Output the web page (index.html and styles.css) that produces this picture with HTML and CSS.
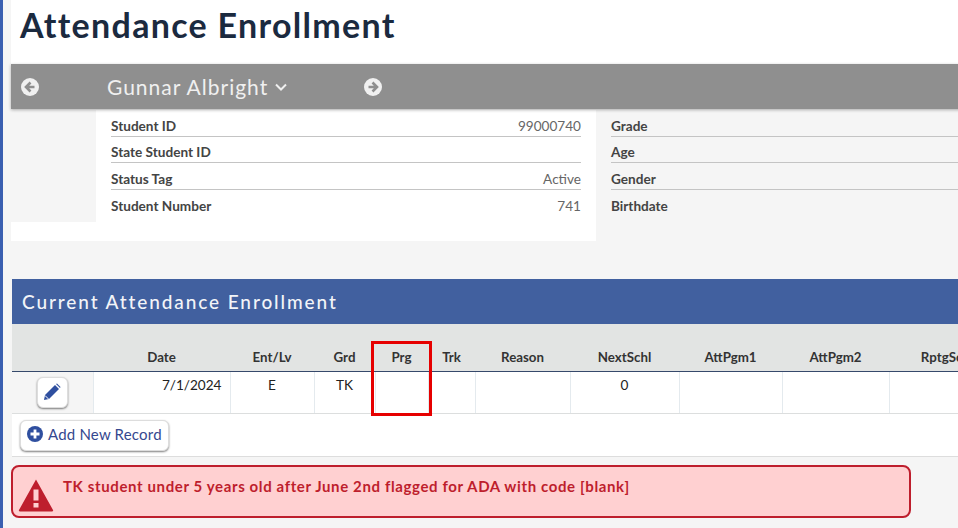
FILE: index.html
```html
<!DOCTYPE html>
<html>
<head>
    <title>Attendance Enrollment</title>
    <link rel="stylesheet" href="styles.css">
</head>
<body>
    <div class="page">
        <h1 class="page-title">Attendance Enrollment</h1>

        <!-- Student banner -->
        <div class="student-bar">
            <svg class="nav-icon" viewBox="0 0 18 18"><circle cx="9" cy="9" r="9" fill="#f0f0f0"/><path d="M9.5 4.5 5 9l4.500 4.500M5.500 9H13.500" fill="none" stroke="#8f8f8f" stroke-width="2.600"/></svg>
            <div class="student-name">
                <span>Gunnar Albright</span>
                <svg class="chevron" viewBox="0 0 12 8"><path d="M1 1.500 6 6.500 11 1.500" fill="none" stroke="#f0f0f0" stroke-width="2"/></svg>
            </div>
            <svg class="nav-icon" viewBox="0 0 18 18"><circle cx="9" cy="9" r="9" fill="#f0f0f0"/><path d="M8.500 4.500 13 9l-4.500 4.500M12.500 9H4.500" fill="none" stroke="#8f8f8f" stroke-width="2.600"/></svg>
        </div>

        <!-- Student details -->
        <div class="student-info">
            <div class="info-left">
                <div class="photo-slot"></div>
                <div class="info-rows">
                    <div class="info-row"><span class="info-label">Student ID</span><span class="info-value">99000740</span></div>
                    <div class="info-row"><span class="info-label">State Student ID</span></div>
                    <div class="info-row"><span class="info-label">Status Tag</span><span class="info-value">Active</span></div>
                    <div class="info-row"><span class="info-label">Student Number</span><span class="info-value">741</span></div>
                </div>
            </div>
            <div class="info-right">
                <div class="info-row"><span class="info-label">Grade</span></div>
                <div class="info-row"><span class="info-label">Age</span></div>
                <div class="info-row"><span class="info-label">Gender</span></div>
                <div class="info-row"><span class="info-label">Birthdate</span></div>
            </div>
        </div>

        <!-- Enrollment table -->
        <div class="section">
            <h2 class="section-title">Current Attendance Enrollment</h2>
            <table class="enroll-table">
                <colgroup>
                    <col class="col-edit">
                    <col class="col-date">
                    <col class="col-entlv">
                    <col class="col-grd">
                    <col class="col-prg">
                    <col class="col-trk">
                    <col class="col-reason">
                    <col class="col-next">
                    <col class="col-pgm1">
                    <col class="col-pgm2">
                    <col class="col-rptg">
                </colgroup>
                <thead>
                    <tr>
                        <th></th>
                        <th>Date</th>
                        <th>Ent/Lv</th>
                        <th>Grd</th>
                        <th>Prg</th>
                        <th>Trk</th>
                        <th>Reason</th>
                        <th>NextSchl</th>
                        <th>AttPgm1</th>
                        <th>AttPgm2</th>
                        <th>RptgSchl</th>
                    </tr>
                </thead>
                <tbody>
                    <tr>
                        <td class="edit-cell">
                            <button class="edit-btn">
                                <svg viewBox="0 0 18 18" width="18" height="18"><path d="M1 17l1-5L12 2l4 4L6 16z" fill="#2f4f9f"/><path d="M13 1l1-.500 3.500 3.500-.500 1z" fill="#2f4f9f"/><path d="M2 12.500l3.500 3.500" stroke="#fff" stroke-width="1"/></svg>
                            </button>
                        </td>
                        <td class="date-cell">7/1/2024</td>
                        <td>E</td>
                        <td>TK</td>
                        <td></td>
                        <td></td>
                        <td></td>
                        <td>0</td>
                        <td></td>
                        <td></td>
                        <td></td>
                    </tr>
                </tbody>
            </table>
            <div class="table-footer">
                <button class="add-btn">
                    <svg viewBox="0 0 16 16" width="16" height="16"><circle cx="8" cy="8" r="8" fill="#2f4f9f"/><path d="M8 3.500v9M3.500 8h9" stroke="#fff" stroke-width="2.800"/></svg>
                    Add New Record
                </button>
            </div>
            <div class="highlight-box"></div>
        </div>

        <!-- Warning -->
        <div class="alert">
            <svg class="alert-icon" viewBox="0 0 36 34" width="36" height="34"><path d="M18 1.500 35 32a1 1 0 0 1-1 1.500H2A1 1 0 0 1 1 32z" fill="#be1e2d"/><path d="M15.500 11.500h5v11h-5zM15.500 25h5v4.500h-5z" fill="#ffd0d1"/></svg>
            <span>TK student under 5 years old after June 2nd flagged for ADA with code [blank]</span>
        </div>
    </div>
</body>
</html>
```

FILE: styles.css
```css
html, body {
    margin: 0;
    height: 100%;
    overflow: hidden;
}

body {
    font-family: Lato, "Liberation Sans", sans-serif;
    background-color: #f5f5f5;
    border-left: 3px solid #3a5fb0;
}

.page {
    padding-left: 8px;
    width: 1100px;
}

.page-title {
    margin: 0;
    height: 64px;
    padding-left: 9px;
    font-size: 34px;
    line-height: 50px;
    font-weight: 700;
    letter-spacing: 1.300px;
    color: #1b2a3f;
    background-color: #fff;
}

/* Student banner */
.student-bar {
    display: flex;
    align-items: center;
    height: 45px;
    padding-left: 10px;
    background-color: #8f8f8f;
    box-shadow: 0 1px 3px rgba(0, 0, 0, 0.3);
    position: relative;
}

.nav-icon {
    width: 18px;
    height: 18px;
    flex-shrink: 0;
}

.student-name {
    display: flex;
    align-items: center;
    gap: 7px;
    width: 257px;
    margin-left: 68px;
    font-size: 21px;
    letter-spacing: 1px;
    color: #f0f0f0;
}

.chevron {
    width: 12px;
    height: 8px;
}

/* Student details */
.student-info {
    display: flex;
    height: 132px;
}

.info-left {
    display: flex;
    width: 585px;
    height: 131px;
    margin-top: 1px;
    background-color: #fff;
}

.photo-slot {
    width: 85px;
    height: 112px;
    background-color: #f5f5f5;
}

.info-rows {
    width: 470px;
    margin-left: 15px;
}

.info-right {
    flex: 1;
    margin-top: 1px;
    margin-left: 15px;
}

.info-row {
    display: flex;
    justify-content: space-between;
    align-items: center;
    box-sizing: border-box;
    height: 26.500px;
    padding-top: 6px;
    font-size: 13.600px;
    border-bottom: 1px solid #c4c4c4;
}

.info-row:last-child {
    border-bottom: none;
}

.info-label {
    font-weight: 700;
    color: #444;
}

.info-value {
    color: #666;
}

/* Enrollment table */
.section {
    position: relative;
    margin-top: 38px;
    margin-left: 1px;
}

.section-title {
    margin: 0;
    height: 45px;
    padding-left: 10px;
    font-size: 19px;
    line-height: 46px;
    font-weight: 500;
    letter-spacing: 1.900px;
    color: #f2f4f8;
    background-color: #41609f;
}

.enroll-table {
    border-collapse: collapse;
    table-layout: fixed;
    width: 993px;
    font-size: 13.600px;
    background-color: #fff;
}

.col-edit { width: 81px; }
.col-date { width: 137px; }
.col-entlv { width: 84px; }
.col-grd { width: 61px; }
.col-prg { width: 53px; }
.col-trk { width: 47px; }
.col-reason { width: 95px; }
.col-next { width: 109px; }
.col-pgm1 { width: 103px; }
.col-pgm2 { width: 107px; }
.col-rptg { width: 116px; }

.enroll-table th {
    box-sizing: border-box;
    height: 47px;
    padding: 0 0 6px;
    vertical-align: bottom;
    font-size: 13.300px;
    font-weight: 700;
    color: #333;
    background-color: #e2e4e3;
    border-bottom: 1px solid #36496b;
}

.enroll-table td {
    height: 42px;
    padding: 5px 0 0;
    box-sizing: border-box;
    vertical-align: top;
    text-align: center;
    color: #222;
    border-left: 1px solid #e4eaee;
    border-bottom: 1px solid #dcdede;
}

.enroll-table td.edit-cell {
    padding: 5px 0 0;
    background-color: #f5f5f5;
    border-left: none;
}

.enroll-table td.date-cell {
    padding-right: 8px;
    text-align: right;
}

.edit-btn {
    display: inline-flex;
    align-items: center;
    justify-content: center;
    width: 31px;
    height: 31px;
    padding: 0;
    background-color: #fff;
    border: 1px solid #ddd;
    border-radius: 6px;
    box-shadow: 0 1px 2px rgba(0, 0, 0, 0.5);
}

.table-footer {
    display: flex;
    align-items: flex-start;
    height: 43px;
    padding: 6px 0 0 8px;
    box-sizing: border-box;
    background-color: #fff;
    border-bottom: 1px solid #ddd;
}

.add-btn {
    display: flex;
    align-items: center;
    gap: 5px;
    height: 31px;
    width: 149px;
    padding: 0 0 2px 6px;
    font-family: inherit;
    font-size: 15px;
    letter-spacing: 0.200px;
    color: #35488f;
    background-color: #fff;
    border: 1px solid #ddd;
    border-radius: 6px;
    box-shadow: 0 1px 2px rgba(0, 0, 0, 0.5);
}

/* Red marker drawn over the Prg column */
.highlight-box {
    position: absolute;
    left: 359px;
    top: 62px;
    width: 55px;
    height: 69px;
    border: 3px solid #e60000;
}

/* Warning */
.alert {
    display: flex;
    align-items: flex-start;
    gap: 9px;
    box-sizing: border-box;
    width: 900px;
    height: 53px;
    margin-top: 8px;
    padding: 10px 0 0 5px;
    font-size: 15px;
    font-weight: 700;
    letter-spacing: 0.620px;
    color: #be1e2d;
    background-color: #ffd0d1;
    border: 2px solid #be1e2d;
    border-radius: 8px;
}

.alert-icon {
    flex-shrink: 0;
    margin-top: 1px;
}
```
